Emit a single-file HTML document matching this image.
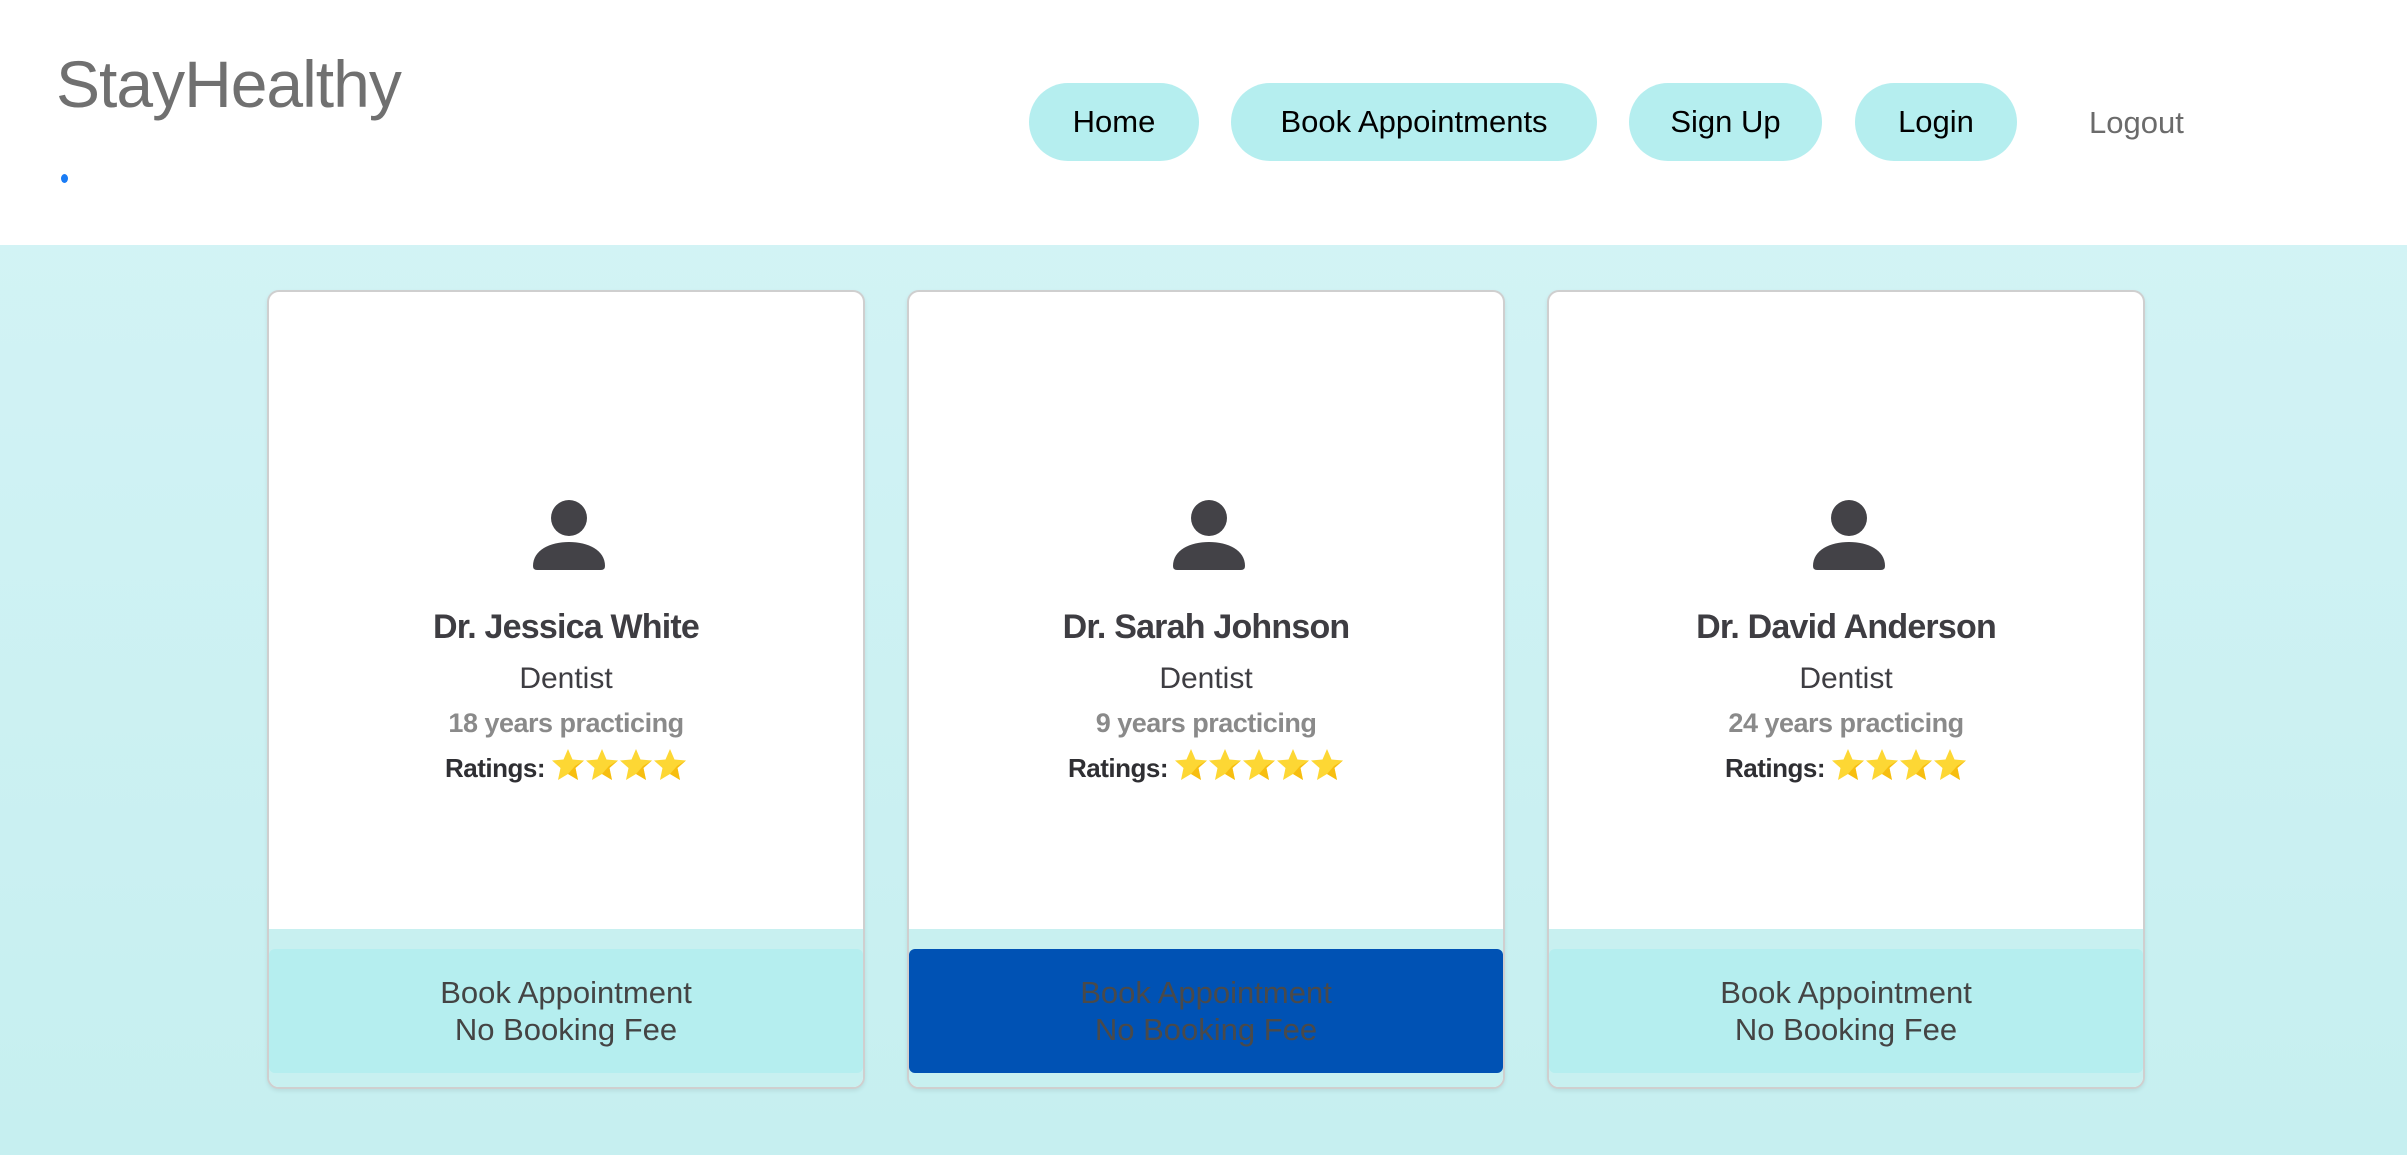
<!DOCTYPE html>
<html><head><meta charset="utf-8"><style>
*{margin:0;padding:0;box-sizing:border-box}
body{width:2407px;height:1155px;overflow:hidden;font-family:"Liberation Sans",sans-serif;background:linear-gradient(#d5f4f6,#c6eff0)}
.hdr{position:absolute;left:0;top:0;width:2407px;height:245px;background:#fff}
.logo{position:absolute;left:56px;top:46px;font-size:66px;color:#707070;letter-spacing:-1px}
.dot{position:absolute;left:61px;top:174px;width:7px;height:9px;border-radius:50%;background:#1a7cf5}
.pill{position:absolute;top:83px;height:78px;border-radius:39px;background:#b5eeef;color:#000;font-size:31px;display:flex;align-items:center;justify-content:center}
.logout{position:absolute;left:2089px;top:83px;height:78px;line-height:80px;font-size:31px;color:#6b6b6b}
.card{position:absolute;top:290px;width:598px;height:799px;background:#fff;border:2px solid #cfcfcf;border-radius:12px;overflow:hidden;box-shadow:0 2px 4px rgba(0,0,0,.08)}
.foot{position:absolute;left:0;right:0;top:637px;bottom:0;background:#c8f0f0}
.btn{position:absolute;left:0;right:0;top:20px;height:124px;background:#b5eeef;border-radius:6px;text-align:center;font-size:31px;color:#444;line-height:37px;padding-top:25px}
.btn.b{background:#0052b4;color:#4a4a4a}
.icon{position:absolute;left:263px;top:207px}
.name{position:absolute;left:0;right:0;top:316px;text-align:center;font-size:34px;font-weight:bold;color:#3e3d42;letter-spacing:-0.8px}
.spec{position:absolute;left:0;right:0;top:370px;text-align:center;font-size:30px;color:#3e3d42}
.yrs{position:absolute;left:0;right:0;top:416px;text-align:center;font-size:27px;color:#8a8a8a;font-weight:bold;letter-spacing:-0.5px}
.rat{position:absolute;left:0;right:0;top:456px;text-align:center;font-size:26px;color:#2f2f33;font-weight:bold;display:flex;justify-content:center;align-items:center;gap:6px;letter-spacing:-0.5px}
.st{width:34px;height:33px}
</style></head><body>
<div class="hdr">
<div class="logo">StayHealthy</div><div class="dot"></div>
<div class="pill" style="left:1029px;width:170px">Home</div>
<div class="pill" style="left:1231px;width:366px">Book Appointments</div>
<div class="pill" style="left:1629px;width:193px">Sign Up</div>
<div class="pill" style="left:1855px;width:162px">Login</div>
<div class="logout">Logout</div>
</div>
<svg width="0" height="0" style="position:absolute"><defs>
<symbol id="s" viewBox="0 0 34 33"><path d="M17 1 L21.5 11.5 L33 12.5 L24.5 20 L27 32 L17 26 L7 32 L9.5 20 L1 12.5 L12.5 11.5 Z" fill="#fdd734"/><path d="M17 26 L27 32 L24.5 20 L33 12.5 L24 18 Z" fill="#f4b400" opacity=".7"/></symbol>
<symbol id="p" viewBox="0 0 74 75"><circle cx="37" cy="19" r="18" fill="#434247"/><path d="M1 67 C1 51 18 43 37 43 C56 43 73 51 73 67 Q73 71 69 71 L5 71 Q1 71 1 67Z" fill="#434247"/></symbol>
</defs></svg>

<div class="card" style="left:267px">
<svg class="icon" width="74" height="75"><use href="#p"/></svg>
<div class="name">Dr. Jessica White</div><div class="spec">Dentist</div><div class="yrs">18 years practicing</div>
<div class="rat">Ratings: <span><svg class="st"><use href="#s"/></svg><svg class="st"><use href="#s"/></svg><svg class="st"><use href="#s"/></svg><svg class="st"><use href="#s"/></svg></span></div>
<div class="foot"><div class="btn">Book Appointment<br>No Booking Fee</div></div>
</div>
<div class="card" style="left:907px">
<svg class="icon" width="74" height="75"><use href="#p"/></svg>
<div class="name">Dr. Sarah Johnson</div><div class="spec">Dentist</div><div class="yrs">9 years practicing</div>
<div class="rat">Ratings: <span><svg class="st"><use href="#s"/></svg><svg class="st"><use href="#s"/></svg><svg class="st"><use href="#s"/></svg><svg class="st"><use href="#s"/></svg><svg class="st"><use href="#s"/></svg></span></div>
<div class="foot"><div class="btn b">Book Appointment<br>No Booking Fee</div></div>
</div>
<div class="card" style="left:1547px">
<svg class="icon" width="74" height="75"><use href="#p"/></svg>
<div class="name">Dr. David Anderson</div><div class="spec">Dentist</div><div class="yrs">24 years practicing</div>
<div class="rat">Ratings: <span><svg class="st"><use href="#s"/></svg><svg class="st"><use href="#s"/></svg><svg class="st"><use href="#s"/></svg><svg class="st"><use href="#s"/></svg></span></div>
<div class="foot"><div class="btn">Book Appointment<br>No Booking Fee</div></div>
</div>
</body></html>
